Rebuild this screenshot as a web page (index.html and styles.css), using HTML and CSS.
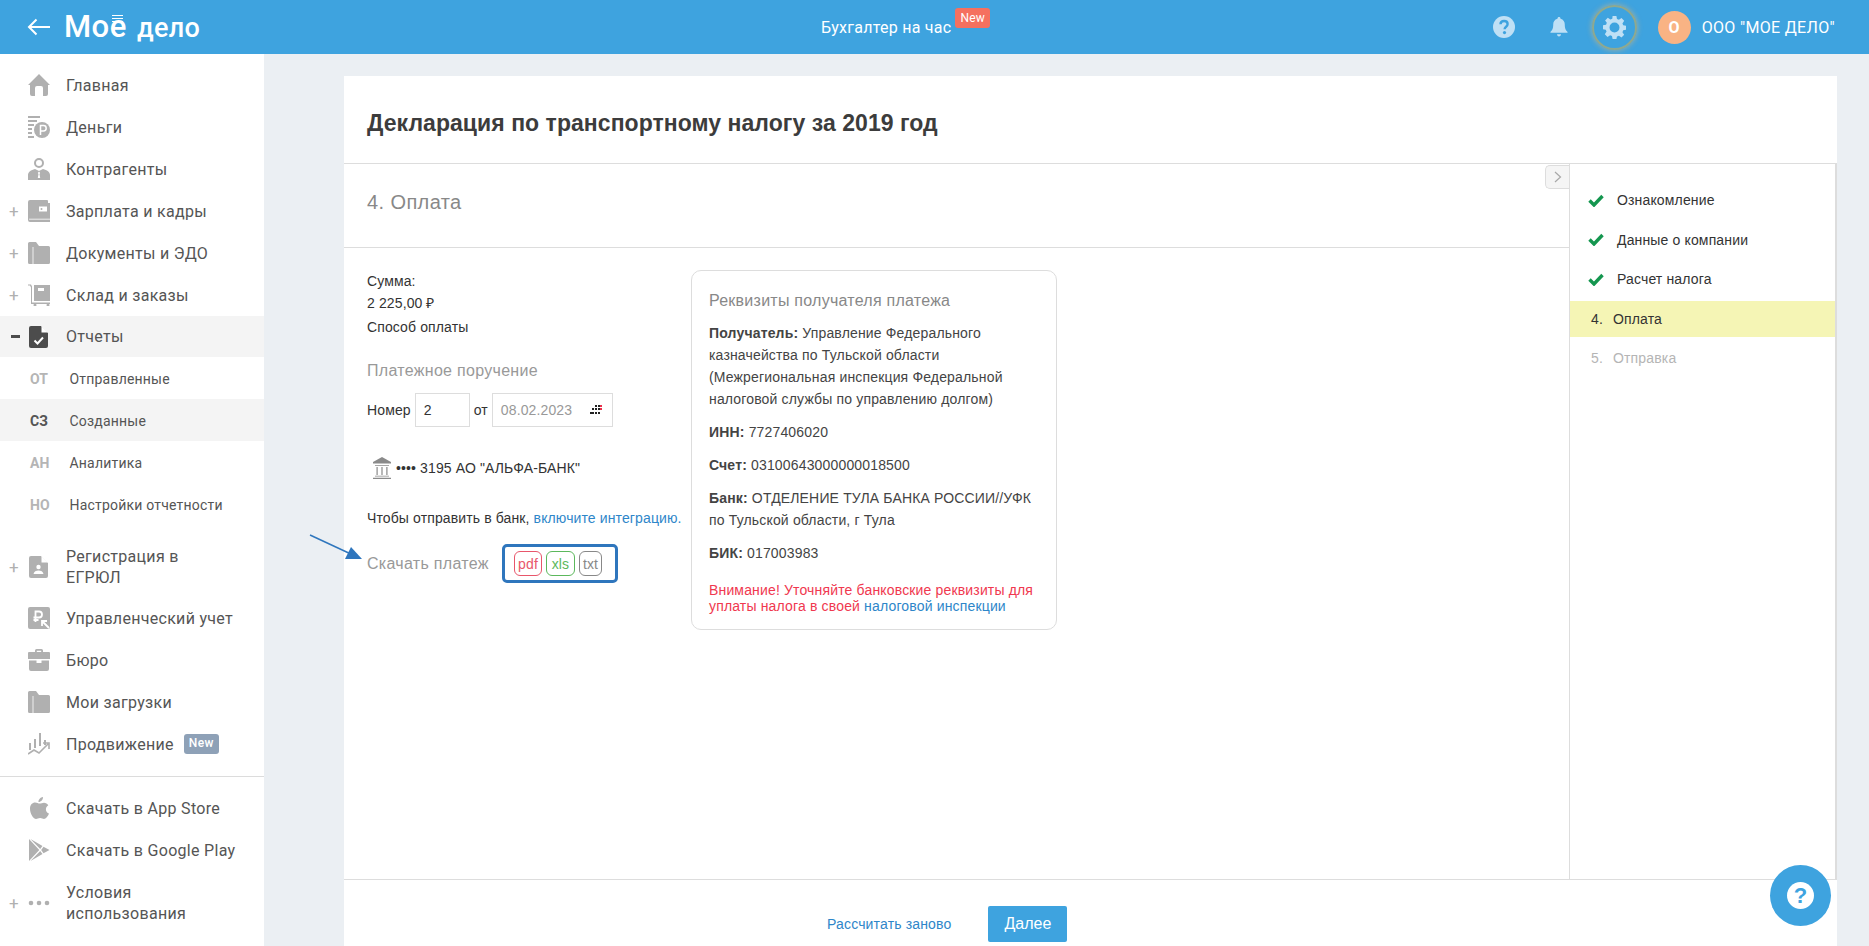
FILE: index.html
```html
<!DOCTYPE html>
<html lang="ru">
<head>
<meta charset="utf-8">
<title>Декларация по транспортному налогу</title>
<link rel="stylesheet" href="styles.css">
</head>
<body>
<header class="topbar">
  <div class="brand">
    <svg class="back" viewBox="0 0 24 18"><path d="M23 9H2M9.500 1.500 2 9l7.500 7.500" fill="none" stroke="#fff" stroke-width="2"/></svg>
    <span class="logo">Мое <span class="logo-small">дело</span><i class="logo-bars"></i></span>
  </div>
  <div class="top-center"><span>Бухгалтер на час</span><span class="badge-new">New</span></div>
  <div class="top-right">
    <svg class="top-ic help-ic" viewBox="0 0 22 22"><circle cx="11" cy="11" r="11" fill="#bfe0f5"/><path d="M7.500 8.300c0-2 1.500-3.300 3.600-3.300s3.500 1.200 3.500 3c0 2.800-3 2.600-3 5.200" fill="none" stroke="#3ea3df" stroke-width="2.400"/><circle cx="11.500" cy="16.600" r="1.600" fill="#3ea3df"/></svg>
    <svg class="top-ic bell-ic" viewBox="0 0 20 22"><path d="M10 0c1 0 1.700.7 1.700 1.700C15 2.600 16.400 5 16.400 8c0 5 1.300 7 3.100 8.500v1H.5v-1C2.300 15 3.600 13 3.600 8c0-3 1.400-5.400 4.700-6.300C8.300.7 9 0 10 0zM7.800 19h4.400c0 1.400-1 2.500-2.200 2.500S7.800 20.400 7.800 19z" fill="#bfe0f5"/></svg>
    <span class="gear-ring">
      <svg class="gear-ic" viewBox="0 0 24 24"><path fill="#bfe0f5" fill-rule="evenodd" d="M10 0h4l.6 3.200 2 .8L19.300 2.200l2.800 2.800-1.800 2.700.8 2 3.200.6v4l-3.200.6-.8 2 1.800 2.700-2.800 2.800-2.700-1.800-2 .8L14 24h-4l-.6-3.200-2-.8-2.700 1.800-2.800-2.800 1.800-2.700-.8-2L0 13.700v-4l3.200-.6.8-2L2.200 4.700 5 1.900l2.700 1.800 2-.8zM12 6.800a5.200 5.200 0 1 0 0 10.400 5.200 5.200 0 0 0 0-10.400z"/></svg>
    </span>
    <span class="avatar">О</span>
    <span class="company">ООО "МОЕ ДЕЛО"</span>
  </div>
</header>

<div class="shell">
  <nav class="sidebar">
    <a class="nav-row"><span class="slot"></span><svg class="ic" viewBox="0 0 22 22"><path d="M11 0 22 11h-2v9a2 2 0 0 1-2 2h-3v-8a2 2 0 0 0-2-2H9a2 2 0 0 0-2 2v8H4a2 2 0 0 1-2-2v-9H0z"/></svg><span class="nav-text">Главная</span></a>
    <a class="nav-row"><span class="slot"></span><svg class="ic" viewBox="0 0 22 22"><path d="M0 0h12v2H0zM0 4h9v2H0zM0 8h6v2H0zM0 12h4v2H0zM0 16h4v2H0zM0 20h6v2H0z"/><circle cx="14" cy="14" r="8"/><path d="M12.500 19v-9.500h3a2.700 2.700 0 0 1 0 5.400h-3" fill="none" stroke="#fff" stroke-width="1.500"/></svg><span class="nav-text">Деньги</span></a>
    <a class="nav-row"><span class="slot"></span><svg class="ic" viewBox="0 0 22 22"><circle cx="11" cy="5" r="4" fill="none" stroke="#b0b0b0" stroke-width="2"/><path d="M0 22v-5c0-3 3-5 7-6l4 2 4-2c4 1 7 3 7 6v5z"/><path d="M11 13.500 9.800 15l.7 1-.7 4h2.400l-.7-4 .7-1z" fill="#fff"/></svg><span class="nav-text">Контрагенты</span></a>
    <a class="nav-row"><span class="slot">+</span><svg class="ic" viewBox="0 0 22 22"><path d="M2 0h17a1 1 0 0 1 1 1v2h2v19H2a2 2 0 0 1-2-2V2a2 2 0 0 1 2-2z"/><path d="M1 19.200h21" stroke="#fff" stroke-width=".8"/><path d="M11 6.500h8v5h-8z" fill="#fff"/><circle cx="13.500" cy="9" r="1" fill="#b0b0b0"/></svg><span class="nav-text">Зарплата и кадры</span></a>
    <a class="nav-row"><span class="slot">+</span><svg class="ic" viewBox="0 0 22 22"><path d="M1.500 0H8l3 4h9.500A1.500 1.500 0 0 1 22 5.500v15a1.500 1.500 0 0 1-1.500 1.500h-19A1.500 1.500 0 0 1 0 20.500v-19A1.500 1.500 0 0 1 1.500 0z"/><path d="M5 5v17" stroke="#fff" stroke-width=".8"/></svg><span class="nav-text">Документы и ЭДО</span></a>
    <a class="nav-row"><span class="slot">+</span><svg class="ic" viewBox="0 0 22 22"><path d="M0 .5h3l1 2v16h18v1.500H3V3.500L2 1.500H0z"/><path d="M6 1h16v16H6z"/><path d="M10 4h6v3h-6z" fill="#fff"/><circle cx="7" cy="21" r="1.500"/><circle cx="20" cy="21" r="1.500"/></svg><span class="nav-text">Склад и заказы</span></a>
    <a class="nav-row nav-row-active"><span class="slot slot-minus"></span><svg class="ic ic-dark" viewBox="0 0 22 22"><path d="M3 0h10l7 7v13a2 2 0 0 1-2 2H3a2 2 0 0 1-2-2V2a2 2 0 0 1 2-2z" fill="#4c4c4c"/><path d="M13.500 0 20 6.500h-6.500z" fill="#fff"/><path d="M6.500 14.500l3 3 5.500-6" fill="none" stroke="#fff" stroke-width="2"/></svg><span class="nav-text">Отчеты</span></a>

    <a class="sub-row"><b>ОТ</b><span>Отправленные</span></a>
    <a class="sub-row sub-row-active"><b>СЗ</b><span>Созданные</span></a>
    <a class="sub-row"><b>АН</b><span>Аналитика</span></a>
    <a class="sub-row"><b>НО</b><span>Настройки отчетности</span></a>

    <a class="nav-row nav-row-tall nav-row-gap"><span class="slot">+</span><svg class="ic" viewBox="0 0 22 22"><path d="M3 0h10l7 7v13a2 2 0 0 1-2 2H3a2 2 0 0 1-2-2V2a2 2 0 0 1 2-2z"/><path d="M13.500 0 20 6.500h-6.500z" fill="#fff"/><circle cx="10.500" cy="11" r="2.200" fill="#fff"/><path d="M5.500 18c.5-2.500 2.500-3.500 5-3.500s4.500 1 5 3.500z" fill="#fff"/></svg><span class="nav-text">Регистрация в<br>ЕГРЮЛ</span></a>
    <a class="nav-row"><span class="slot"></span><svg class="ic" viewBox="0 0 22 22"><rect width="22" height="22" rx="2"/><path d="M7.500 15V4.500h3.500a3 3 0 0 1 0 6H5.500M5.500 13h5" fill="none" stroke="#fff" stroke-width="1.800"/><path d="M21 21l-6-6M14 19v-5h5" fill="none" stroke="#fff" stroke-width="1.800"/></svg><span class="nav-text">Управленческий учет</span></a>
    <a class="nav-row"><span class="slot"></span><svg class="ic" viewBox="0 0 22 22"><path d="M7 3V1.500A1.500 1.500 0 0 1 8.500 0h5A1.500 1.500 0 0 1 15 1.500V3h6a1 1 0 0 1 1 1v6H0V4a1 1 0 0 1 1-1zm1.800 0h4.400V1.800H8.800z" fill-rule="evenodd"/><path d="M1 11.500h7.500V14h5v-2.500H21V20a2 2 0 0 1-2 2H3a2 2 0 0 1-2-2z"/></svg><span class="nav-text">Бюро</span></a>
    <a class="nav-row"><span class="slot"></span><svg class="ic" viewBox="0 0 22 22"><path d="M1.500 0H8l3 4h9.500A1.500 1.500 0 0 1 22 5.500v15a1.500 1.500 0 0 1-1.500 1.500h-19A1.500 1.500 0 0 1 0 20.500v-19A1.500 1.500 0 0 1 1.500 0z"/><path d="M5 5v17" stroke="#fff" stroke-width=".8"/></svg><span class="nav-text">Мои загрузки</span></a>
    <a class="nav-row"><span class="slot"></span><svg class="ic" viewBox="0 0 22 22"><path d="M1 10h2v7H1zM6 6h2v9H6zM11 0h2v13h-2zM16 7h2v5h-2z"/><path d="M0 21l6-4 5 3 9-9M15 10h6v6" fill="none" stroke="#b0b0b0" stroke-width="1.600"/></svg><span class="nav-text">Продвижение</span><span class="badge-side">New</span></a>

    <hr class="nav-sep">

    <a class="nav-row"><span class="slot"></span><svg class="ic" viewBox="0 0 22 22"><path d="M15 0c.2 2.500-1.900 5-4.500 5C10.300 2.600 12.500.3 15 0zM16 5.800c1.800 0 3.400 1 4.300 2.400-3.500 2-3 7 .7 8.400-1 2.500-3 5.400-5 5.400-1.300 0-2.100-.9-3.900-.9-1.900 0-2.700.9-4 .9-3 0-6.100-6-6.100-10.300 0-4 2.500-6.200 5.100-6.200 1.900 0 3.200 1.100 4.600 1.100 1.300 0 2.600-.8 4.300-.8z"/></svg><span class="nav-text">Скачать в App Store</span></a>
    <a class="nav-row"><span class="slot"></span><svg class="ic" viewBox="0 0 22 22"><path d="M1 0v22l10.300-11zM2.500 0l12 7-2.300 3zM2.500 22l12-7-2.300-3zM15.500 7.800 21.500 11l-6 3.200L13.200 11z"/></svg><span class="nav-text">Скачать в Google Play</span></a>
    <a class="nav-row nav-row-tall"><span class="slot">+</span><svg class="ic" viewBox="0 0 22 22"><circle cx="3" cy="11" r="2.300"/><circle cx="11" cy="11" r="2.300"/><circle cx="19" cy="11" r="2.300"/></svg><span class="nav-text">Условия<br>использования</span></a>
  </nav>

  <main class="main">
    <section class="panel">
      <h1 class="panel-title">Декларация по транспортному налогу за 2019 год</h1>
      <div class="panel-body">
        <div class="work">
          <button class="collapse" type="button"><svg viewBox="0 0 8 12"><path d="M1 1l5.500 5L1 11" fill="none" stroke="#a8a8a8" stroke-width="1.200"/></svg></button>
          <h2 class="step-title">4. Оплата</h2>
          <div class="work-row">
            <div class="pay">
              <p class="pay-line">Сумма:</p>
              <p class="pay-line">2 225,00 ₽</p>
              <p class="pay-line pay-method">Способ оплаты</p>
              <h3 class="pay-head">Платежное поручение</h3>
              <div class="order">
                <label>Номер</label>
                <span class="field field-num">2</span>
                <label>от</label>
                <span class="field field-date">08.02.2023
                  <svg class="cal" viewBox="0 0 13 10"><path d="M5 0h2v2H5zM8 0h2v2H8zM2 3h2v2H2zM5 3h2v2H5zM8 3h2v2H8zM0 7h2v2H0zM2 7h2v2H2zM5 7h2v2H5zM8 7h2v2H8z" fill="#222"/><path d="M10 0h2v2h-2zM10 3h2v2h-2z" fill="#e8304a"/></svg>
                </span>
              </div>
              <div class="bank">
                <svg class="bank-ic" viewBox="0 0 18 22"><path d="M9 0l9 5v1.500H0V5z" fill="#8a8a8a"/><path d="M2 8h14v.8H2zM3.500 10h1.200v8H3.500zM8.400 10h1.200v8H8.400zM13.300 10h1.200v8h-1.200zM2 18.800h14v.8H2zM0 20.800h18V22H0z" fill="#8a8a8a"/></svg>
                <span>•••• 3195 АО "АЛЬФА-БАНК"</span>
              </div>
              <p class="hint">Чтобы отправить в банк, <a class="link">включите интеграцию.</a></p>
              <div class="download">
                <span class="download-label">Скачать платеж</span>
                <div class="formats">
                  <a class="fmt fmt-pdf">pdf</a>
                  <a class="fmt fmt-xls">xls</a>
                  <a class="fmt fmt-txt">txt</a>
                </div>
              </div>
            </div>
            <aside class="card">
              <h3 class="card-head">Реквизиты получателя платежа</h3>
              <p class="card-p"><b>Получатель:</b> Управление Федерального казначейства по Тульской области (Межрегиональная инспекция Федеральной налоговой службы по управлению долгом)</p>
              <p class="card-p"><b>ИНН:</b> 7727406020</p>
              <p class="card-p"><b>Счет:</b> 03100643000000018500</p>
              <p class="card-p"><b>Банк:</b> ОТДЕЛЕНИЕ ТУЛА БАНКА РОССИИ//УФК по Тульской области, г Тула</p>
              <p class="card-p"><b>БИК:</b> 017003983</p>
              <p class="card-warn">Внимание! Уточняйте банковские реквизиты для уплаты налога в своей <a class="link">налоговой инспекции</a></p>
            </aside>
          </div>
        </div>
        <ol class="steps">
          <li class="step"><svg class="check" viewBox="0 0 16 13"><path d="M1.500 6.500 6 11l8.500-9" fill="none" stroke="#14964f" stroke-width="3.400"/></svg>Ознакомление</li>
          <li class="step"><svg class="check" viewBox="0 0 16 13"><path d="M1.500 6.500 6 11l8.500-9" fill="none" stroke="#14964f" stroke-width="3.400"/></svg>Данные о компании</li>
          <li class="step"><svg class="check" viewBox="0 0 16 13"><path d="M1.500 6.500 6 11l8.500-9" fill="none" stroke="#14964f" stroke-width="3.400"/></svg>Расчет налога</li>
          <li class="step step-current"><span class="step-num">4.</span>Оплата</li>
          <li class="step step-next"><span class="step-num">5.</span>Отправка</li>
        </ol>
      </div>
      <footer class="panel-foot">
        <a class="link foot-link">Рассчитать заново</a>
        <button class="btn" type="button">Далее</button>
      </footer>
    </section>
  </main>
</div>

<svg class="note-arrow" viewBox="0 0 56 28"><path d="M1 1 44 21" stroke="#2f76bd" stroke-width="1.500" fill="none"/><path d="M53 25 36 25 42 13z" fill="#2f76bd"/></svg>
<a class="fab"><span class="fab-inner">?</span></a>
</body>
</html>
```

FILE: styles.css
```css
* { box-sizing: border-box; }
html, body { margin: 0; height: 946px; overflow: hidden; }
body {
  background: #ebeff3;
  font-family: "Liberation Sans", Arial, sans-serif;
  font-size: 14px;
  letter-spacing: .12px;
  color: #333;
  position: relative;
}
a { color: inherit; text-decoration: none; }
p, h1, h2, h3, ol { margin: 0; padding: 0; }

.topbar {
  height: 54px;
  background: #3ea3df;
  display: grid;
  grid-template-columns: 1fr auto 1fr;
  align-items: center;
  color: #fff;
  font-family: Roboto, sans-serif;
  letter-spacing: 0;
}
.brand { display: flex; align-items: center; padding-left: 27px; }
.back { width: 24px; height: 18px; }
.logo {
  position: relative;
  margin-left: 13px;
  font-size: 31px;
  line-height: 36px;
  font-weight: 500;
  letter-spacing: .5px;
  white-space: nowrap;
}
.logo-small { font-size: 27px; letter-spacing: .3px; margin-left: 2px; }
.logo-bars {
  position: absolute;
  left: 48px;
  top: 6px;
  width: 11px;
  height: 7px;
  background: repeating-linear-gradient(#fff 0 1.300px, transparent 1.300px 2.800px);
}
.top-center { display: flex; font-size: 16px; align-items: center; letter-spacing: .25px; margin-right: 58px; }
.badge-new {
  background: #f5705f;
  border-radius: 3px;
  font-size: 12px;
  line-height: 20px;
  height: 20px;
  padding: 0 5px;
  margin: -18px 0 0 4px;
}
.top-right { display: flex; align-items: center; justify-content: flex-end; padding-right: 34px; font-size: 16px; }
.top-ic { display: block; height: 22px; }
.help-ic { width: 22px; }
.bell-ic { width: 18px; margin-left: 35px; }
.gear-ring {
  width: 45px;
  height: 45px;
  margin-left: 24px;
  border-radius: 50%;
  border: 2px solid #8fa98f;
  box-shadow: 0 0 5px 1px rgba(238, 186, 120, .45);
  display: flex;
  align-items: center;
  justify-content: center;
}
.gear-ic { width: 23px; height: 23px; }
.avatar {
  width: 33px;
  height: 33px;
  margin-left: 21px;
  border-radius: 50%;
  background: #f9b384;
  font-weight: 700;
  display: flex;
  align-items: center;
  justify-content: center;
}
.company { margin-left: 11px; white-space: nowrap; letter-spacing: .33px; }

.shell { display: flex; height: 892px; }
.sidebar {
  width: 264px;
  flex: none;
  background: #fff;
  padding-top: 10px;
  font-family: Roboto, sans-serif;
  color: #555;
  letter-spacing: .3px;
}
.nav-row {
  display: flex;
  align-items: center;
  height: 42px;
  padding-left: 9px;
  font-size: 16px;
  line-height: 21px;
}
.nav-row-tall { height: 63px; }
.nav-row-gap { margin-top: 10px; height: 62px; padding-top: 2px; }
.nav-row-active { background: #f4f4f4; height: 41px; }
.slot {
  width: 19px;
  flex: none;
  color: #b0b0b0;
  font-size: 17px;
  line-height: 20px;
}
.slot-minus { height: 2.500px; background: #4c4c4c; width: 9px; margin-left: 2px; margin-right: 8px; }
.ic { width: 22px; height: 22px; flex: none; fill: #b0b0b0; }
.nav-text { margin-left: 16px; white-space: nowrap; }
.badge-side {
  margin-left: 10px;
  background: #8ea1b7;
  color: #fff;
  font-size: 12px;
  font-weight: 500;
  line-height: 19px;
  height: 20px;
  padding: 0 5px;
  border-radius: 3px;
}
.sub-row {
  display: flex;
  align-items: center;
  height: 42px;
  padding: 2px 0 0 30px;
  font-size: 14px;
  letter-spacing: .2px;
}
.sub-row b { width: 39.500px; flex: none; font-size: 14px; color: #b5b5b5; font-weight: 700; letter-spacing: 0; }
.sub-row-active { background: #f4f4f4; }
.sub-row-active b { color: #555; }
.nav-sep { border: 0; border-top: 1px solid #dcdcdc; margin: 11px 0 10px; }

.main { flex: 1; padding: 22px 32px 0 80px; min-width: 0; }
.panel { background: #fff; height: 870px; display: flex; flex-direction: column; }
.panel-title {
  height: 88px;
  flex: none;
  padding-left: 23px;
  font-size: 23px;
  font-weight: 700;
  letter-spacing: .05px;
  line-height: 94px;
  color: #3c3c3c;
  border-bottom: 1px solid #ddd;
}
.panel-body { height: 716px; flex: none; display: flex; border-bottom: 1px solid #ddd; }
.work { flex: 1; position: relative; min-width: 0; }
.collapse {
  position: absolute;
  right: 0;
  top: 1px;
  width: 24px;
  height: 24px;
  padding: 0;
  background: #f5f5f5;
  border: 1px solid #ddd;
  border-right: 0;
  border-radius: 5px 0 0 5px;
  display: flex;
  align-items: center;
  justify-content: center;
}
.collapse svg { width: 8px; height: 12px; }
.step-title {
  height: 84px;
  padding-left: 23px;
  font-size: 20px;
  font-weight: 400;
  letter-spacing: .4px;
  line-height: 77px;
  color: #888;
  border-bottom: 1px solid #ddd;
}
.work-row { display: flex; padding: 22px 0 0 23px; }
.pay { width: 324px; flex: none; }
.pay-line { line-height: 22px; }
.pay-method { margin-top: 2px; }
.pay-head { margin-top: 22px; font-size: 16px; font-weight: 400; line-height: 22px; letter-spacing: .3px; color: #999; }
.order { display: flex; align-items: center; margin-top: 11px; }
.field {
  height: 34px;
  border: 1px solid #ddd;
  display: flex;
  align-items: center;
  padding-left: 8px;
}
.field-num { width: 55px; margin: 0 4px 0 4px; font-size: 14px; }
.field-date { width: 121px; margin-left: 4px; color: #999; justify-content: space-between; padding-right: 9px; }
.cal { width: 13px; height: 10px; }
.bank { display: flex; align-items: center; height: 30px; margin-top: 26px; padding-left: 6px; color: #333; }
.bank-ic { width: 18px; height: 22px; margin-right: 5px; }
.hint { margin-top: 24px; line-height: 22px; }
.link { color: #2e86c9; }
.download { display: flex; align-items: center; margin-top: 15px; }
.download-label { width: 135px; font-size: 16px; letter-spacing: .3px; color: #999; }
.formats {
  width: 116px;
  height: 39px;
  border: 3px solid #2f76bd;
  border-radius: 5px;
  display: flex;
  align-items: center;
  gap: 4px;
  padding-left: 9px;
}
.fmt {
  height: 25px;
  border: 1px solid;
  border-radius: 6px;
  display: flex;
  align-items: center;
  justify-content: center;
  font-size: 14px;
}
.fmt-pdf { width: 28px; color: #e8566b; border-color: #e8566b; }
.fmt-xls { width: 29px; color: #5cb85c; border-color: #5cb85c; }
.fmt-txt { width: 23px; color: #888; border-color: #888; }

.card {
  width: 366px;
  height: 360px;
  flex: none;
  border: 1px solid #ddd;
  border-radius: 10px;
  padding: 19px 17px 0 17px;
  color: #444;
  letter-spacing: .16px;
}
.card-head { font-size: 16px; font-weight: 400; line-height: 22px; letter-spacing: .25px; color: #888; margin-bottom: 10px; }
.card-p { line-height: 22px; margin-bottom: 11px; }
.card-warn { line-height: 16px; color: #f0384f; margin-top: 18px; }

.steps {
  width: 268px;
  flex: none;
  list-style: none;
  padding-top: 18px;
  border-left: 1px solid #ddd;
  border-right: 2px solid #ddd;
  display: flex;
  flex-direction: column;
  gap: 3.500px;
}
.step {
  height: 36px;
  display: flex;
  align-items: center;
  padding-left: 21px;
  color: #333;
  letter-spacing: .15px;
}
.check { width: 16px; height: 13px; margin: 0 13px 0 -3px; }
.step-num { width: 22px; }
.step-current { background: #f5f5b5; }
.step-next { color: #b5b5b5; }

.panel-foot {
  flex: 1;
  display: flex;
  align-items: flex-start;
  padding: 26px 0 0 483px;
}
.foot-link { line-height: 36px; letter-spacing: .16px; }
.btn {
  width: 79px;
  height: 36px;
  margin-left: 37px;
  border: 0;
  border-radius: 2px;
  background: #3ea3df;
  color: #fff;
  font: 16px "Liberation Sans", Arial, sans-serif;
  padding-bottom: 2px;
}

.note-arrow { position: absolute; left: 309px; top: 534px; width: 56px; height: 28px; }
.fab {
  position: absolute;
  left: 1770px;
  top: 865px;
  width: 61px;
  height: 61px;
  border-radius: 50%;
  background: #3ea3df;
  display: flex;
  align-items: center;
  justify-content: center;
}
.fab-inner {
  width: 27px;
  height: 27px;
  border-radius: 50%;
  background: #fff;
  color: #3ea3df;
  font: 700 22px/27px "Liberation Sans", Arial, sans-serif;
  text-align: center;
}
```
